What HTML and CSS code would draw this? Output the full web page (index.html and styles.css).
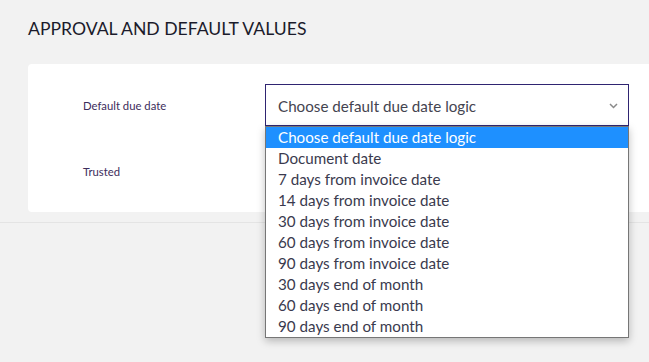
FILE: index.html
```html
<!DOCTYPE html>
<html lang="en">
<head>
    <meta charset="UTF-8">
    <meta name="viewport" content="width=device-width, initial-scale=1.0">
    <title>Approval and default values</title>
    <link rel="stylesheet" href="styles.css">
</head>
<body>
    <div class="page">
        <h1>APPROVAL AND DEFAULT VALUES</h1>
        <div class="card">
            <div class="row">
                <label class="label">Default due date</label>
                <div class="select-wrap">
                    <div class="select">
                        <span>Choose default due date logic</span>
                        <svg class="chevron" width="9" height="6" viewBox="0 0 9 6">
                            <path d="M1 1 L4.5 4.5 L8 1" fill="none" stroke="#8a8a8a" stroke-width="1.5"/>
                        </svg>
                    </div>
                    <ul class="options">
                        <li class="active">Choose default due date logic</li>
                        <li>Document date</li>
                        <li>7 days from invoice date</li>
                        <li>14 days from invoice date</li>
                        <li>30 days from invoice date</li>
                        <li>60 days from invoice date</li>
                        <li>90 days from invoice date</li>
                        <li>30 days end of month</li>
                        <li>60 days end of month</li>
                        <li>90 days end of month</li>
                    </ul>
                </div>
            </div>
            <div class="row">
                <label class="label">Trusted</label>
            </div>
        </div>
    </div>
    <div class="divider"></div>
</body>
</html>
```

FILE: styles.css
```css
html, body {
    height: 100%;
}

body {
    margin: 0;
    background: #f2f2f2;
    font-family: 'Lato', 'Noto Sans', sans-serif;
    color: #3a3a48;
}

.page {
    padding-left: 28px;
    position: relative;
    z-index: 1;
}

h1 {
    margin: 0;
    padding: 19px 0 26px;
    font-size: 17.6px;
    font-weight: 400;
    color: #1b1b2b;
    line-height: 19px;
}

.card {
    background: #fff;
    border-radius: 4px 0 0 4px;
    padding: 20px 20px 20px 55px;
    display: flex;
    flex-direction: column;
    gap: 24px;
}

.row {
    display: flex;
    align-items: center;
    height: 42px;
}

.label {
    width: 182px;
    font-size: 11.3px;
    color: #3d2d5c;
}

.select-wrap {
    position: relative;
    width: 364px;
}

.select {
    box-sizing: border-box;
    height: 42px;
    border: 1px solid #2f2471;
    display: flex;
    align-items: center;
    justify-content: space-between;
    padding: 2px 10px 0 12px;
    font-size: 15.2px;
    color: #444450;
}

.chevron {
    display: block;
}

.options {
    position: absolute;
    top: 100%;
    left: 0;
    right: 0;
    margin: 0;
    padding: 0;
    list-style: none;
    background: #fff;
    border: 1px solid #767676;
    box-shadow: 0 3px 8px rgba(0, 0, 0, 0.25);
    z-index: 2;
}

.options li {
    height: 21px;
    line-height: 21px;
    padding-left: 12px;
    font-size: 15.2px;
    color: #3a3a4e;
}

.options li.active {
    background: #1e90ff;
    color: #fff;
}

.divider {
    margin-top: 10px;
    border-top: 1px solid #e4e4e4;
}
```
